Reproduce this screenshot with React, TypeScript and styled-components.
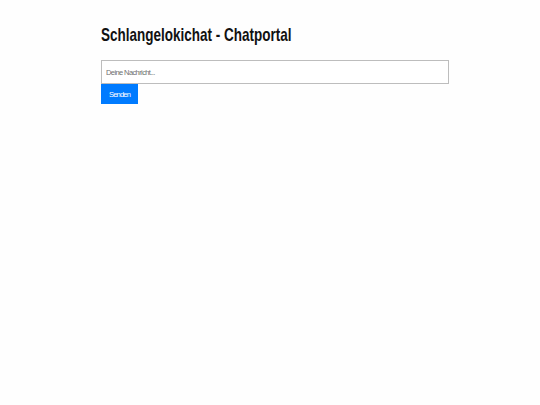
import styled, { createGlobalStyle } from "styled-components";

const GlobalStyle = createGlobalStyle`
  html, body {
    margin: 0;
    padding: 0;
    background: #fefefe;
  }

  body {
    font-family: "Liberation Sans", Arial, sans-serif;
  }
`;

const Page = styled.div`
  width: 348px;
  margin: 0 auto;
  padding: 23px 0 0 10px;
`;

const Title = styled.h1`
  margin: 0 0 14px;
  font-size: 19px;
  font-weight: 700;
  color: #111;
  line-height: 23px;

  span {
    display: inline-block;
    transform: scaleX(0.71);
    transform-origin: left center;
    white-space: nowrap;
  }
`;

const Form = styled.form`
  display: flex;
  flex-direction: column;
  align-items: flex-start;
`;

const Input = styled.input`
  box-sizing: border-box;
  width: 100%;
  height: 24px;
  padding: 0 4px;
  border: 1px solid #bdbdbd;
  font-family: inherit;
  font-size: 7.5px;
  letter-spacing: -0.6px;
  color: #333;
  outline: none;

  &::placeholder {
    color: #6f6f6f;
  }
`;

const Button = styled.button`
  height: 20px;
  padding: 0 8px;
  border: none;
  background: #007bff;
  color: #fff;
  font-family: inherit;
  font-size: 7.5px;
  letter-spacing: -0.8px;
  cursor: pointer;
`;

const App = () => {
  return (
    <>
      <GlobalStyle />
      <Page>
        <Title>
          <span>Schlangelokichat - Chatportal</span>
        </Title>
        <Form onSubmit={(e) => e.preventDefault()}>
          <Input placeholder="Deine Nachricht..." />
          <Button type="submit">Senden</Button>
        </Form>
      </Page>
    </>
  );
};

export default App;
